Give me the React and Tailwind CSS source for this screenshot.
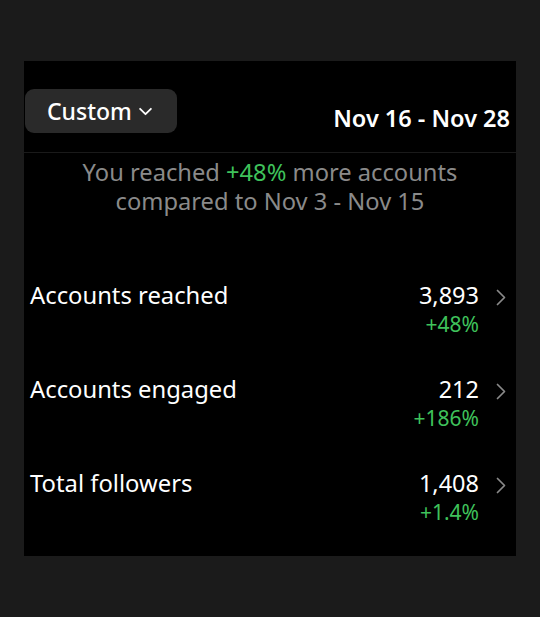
import React from "react";

const rows = [
  { label: "Accounts reached", value: "3,893", delta: "+48%" },
  { label: "Accounts engaged", value: "212", delta: "+186%" },
  { label: "Total followers", value: "1,408", delta: "+1.4%" },
];

function Chevron({ className }) {
  return (
    <svg viewBox="0 0 10 17" className={className} fill="none" stroke="currentColor" strokeWidth="1.7" strokeLinecap="round" strokeLinejoin="round">
      <path d="M1.5 1.5 L8.5 8.5 L1.5 15.5" />
    </svg>
  );
}

export default function App() {
  return (
    <div className="w-[540px] h-[617px] bg-[#1b1b1b] pt-[61px] px-[24px]" style={{ fontFamily: '"Noto Sans", "Open Sans", sans-serif' }}>
      <div className="w-[492px] h-[495px] bg-black overflow-hidden">
        <div className="h-[92px] border-b border-[#1a1a1a] flex items-start justify-between pl-[1px] pr-[6px] pt-[28px]">
          <div className="h-[44px] w-[152px] rounded-[9px] bg-[#2a2a2a] flex items-center pl-[22px] gap-[6px]">
            <span className="text-white text-[23px] leading-none font-medium">Custom</span>
            <svg viewBox="0 0 16 10" className="w-[15px] h-[9px] text-white" fill="none" stroke="currentColor" strokeWidth="2" strokeLinecap="round" strokeLinejoin="round">
              <path d="M2 2 L8 8 L14 2" />
            </svg>
          </div>
          <div className="text-white text-[23.5px] font-semibold leading-none mt-[18px]">Nov 16 - Nov 28</div>
        </div>
        <div className="pt-[5px] text-center text-[#8a8a8a] text-[23.7px] leading-[29px]">
          <div>You reached <span className="text-[#3fc25b]">+48%</span> more accounts</div>
          <div>compared to Nov 3 - Nov 15</div>
        </div>
        <div className="mt-[64px] flex flex-col">
          {rows.map((r) => (
            <div key={r.label} className="h-[94px] shrink-0 flex items-start justify-between pl-[6px] pr-[10px]">
              <div className="text-white text-[23.8px] leading-[30px]">{r.label}</div>
              <div className="flex items-start gap-[17px]">
                <div className="flex flex-col items-end">
                  <div className="text-white text-[23.5px] leading-[30px]">{r.value}</div>
                  <div className="text-[#3fc25b] text-[21px] leading-[28px]">{r.delta}</div>
                </div>
                <Chevron className="w-[10px] h-[17px] mt-[9px] text-[#8a8a8a]" />
              </div>
            </div>
          ))}
        </div>
      </div>
    </div>
  );
}
